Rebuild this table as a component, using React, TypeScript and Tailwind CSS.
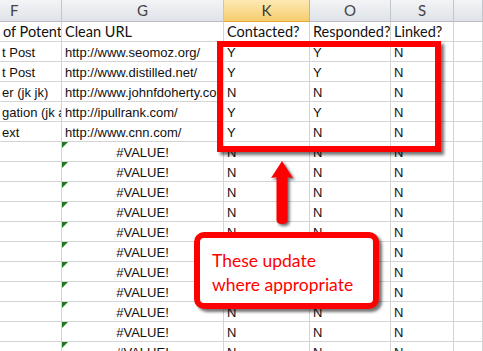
import React from "react";

type Row = { f: string; g: string; k: string; o: string; s: string; err?: boolean };

const dataRows: Row[] = [
  { f: "t Post", g: "http://www.seomoz.org/", k: "Y", o: "Y", s: "N" },
  { f: "t Post", g: "http://www.distilled.net/", k: "Y", o: "Y", s: "N" },
  { f: "er (jk jk)", g: "http://www.johnfdoherty.com/", k: "N", o: "N", s: "N" },
  { f: "gation (jk and more)", g: "http://ipullrank.com/", k: "Y", o: "Y", s: "N" },
  { f: "ext", g: "http://www.cnn.com/", k: "Y", o: "N", s: "N" },
  ...Array.from({ length: 11 }, () => ({ f: "", g: "#VALUE!", k: "N", o: "N", s: "N", err: true })),
];

const cell =
  "h-[20px] border-r border-b border-[#d4d4d4] overflow-hidden whitespace-nowrap text-[13px] leading-[21px] text-[#111] font-['Liberation_Sans',Arial,sans-serif]";
const label =
  "h-[20px] border-r border-b border-[#d4d4d4] overflow-hidden whitespace-nowrap text-[14.5px] leading-[20px] text-[#111] font-['Lato','Open_Sans',sans-serif] pl-[3px]";

function HeaderCell({ text, selected, className = "" }: { text: string; selected?: boolean; className?: string }) {
  return (
    <div
      className={
        "h-[22px] flex items-center justify-center text-[15px] border-b font-['Lato','Open_Sans',sans-serif] " +
        (selected
          ? "bg-gradient-to-b from-[#fde9b4] to-[#f6cd6c] text-[#3b3b3b] border-r border-r-[#e2b257] border-b-[#e2a937] "
          : "bg-gradient-to-b from-[#f3f4f6] to-[#dfe3e8] text-[#444] border-r border-r-[#c3c7cc] border-b-[#b9bdc3] ") +
        className
      }
    >
      {text}
    </div>
  );
}

export default function App() {
  return (
    <div className="relative w-[483px] h-[351px] overflow-hidden bg-white">
      <div className="grid grid-cols-[62px_162px_86px_81px_63px_29px]">
        <HeaderCell text="F" className="justify-start pl-[10px]" />
        <HeaderCell text="G" />
        <HeaderCell text="K" selected />
        <HeaderCell text="O" />
        <HeaderCell text="S" />
        <HeaderCell text="" />

        {/* column labels */}
        <div className={label + " pl-[2px]"}>of Potential</div>
        <div className={label}>Clean URL</div>
        <div className={label}>Contacted?</div>
        <div className={label}>Responded?</div>
        <div className={label}>Linked?</div>
        <div className={label} />

        {dataRows.map((r, i) => (
          <React.Fragment key={i}>
            <div className={cell + " pl-[2px]"}>{r.f}</div>
            <div className={cell + " relative " + (r.err ? "text-center" : "pl-[3px]")}>
              {r.err && (
                <span className="absolute left-0 top-0 w-0 h-0 border-t-[6px] border-t-[#1f7a1f] border-r-[6px] border-r-transparent" />
              )}
              {r.g}
            </div>
            <div className={cell + " pl-[3px]"}>{r.k}</div>
            <div className={cell + " pl-[3px]"}>{r.o}</div>
            <div className={cell + " pl-[3px]"}>{r.s}</div>
            <div className={cell} />
          </React.Fragment>
        ))}
      </div>

      {/* highlight around the status columns */}
      <div className="absolute left-[217px] top-[41px] w-[224px] h-[111px] border-[6px] border-[#ff0000] shadow-[3px_3px_3px_rgba(0,0,0,0.55)]" />

      {/* arrow pointing up to the highlight */}
      <svg
        className="absolute left-[268px] top-[158px] drop-shadow-[2px_2px_1.5px_rgba(0,0,0,0.6)]"
        width="30"
        height="70"
        viewBox="0 0 30 70"
      >
        <path d="M14 3 L25 20 L19.5 19 L19.5 62 Q19.5 66 14 66 Q8.5 66 8.5 62 L8.5 19 L3 20 Z" fill="#ff0000" />
      </svg>

      {/* callout */}
      <div className="absolute left-[194px] top-[232px] w-[185px] h-[77px] rounded-[10px] border-[6px] border-[#ff0000] bg-white shadow-[3px_3px_3px_rgba(0,0,0,0.55)] pl-[12px] pt-[11px]">
        <div className="text-[17.5px] leading-[24px] text-[#ff0000] font-['Lato','Open_Sans',sans-serif] font-normal">
          These update
          <br />
          where appropriate
        </div>
      </div>
    </div>
  );
}
